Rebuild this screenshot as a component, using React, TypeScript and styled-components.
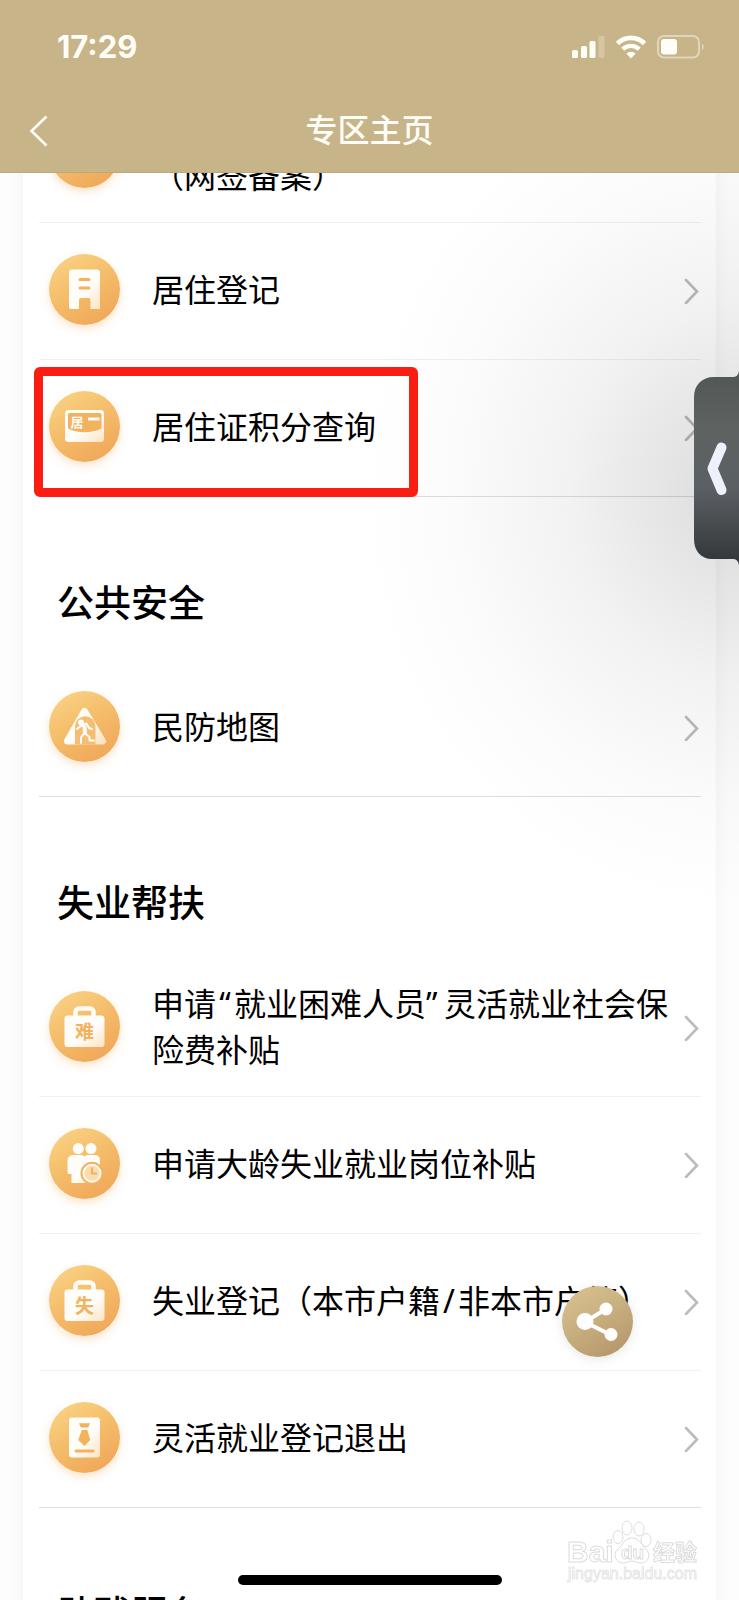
import React from "react";
import styled, { createGlobalStyle } from "styled-components";

const sans = '"Noto Sans CJK SC", "Noto Sans", sans-serif';
const ink = "#f2b25e";

const GlobalStyle = createGlobalStyle`
  * { box-sizing: border-box; }
  body { margin: 0; background: #fdfdfd; color: #000; font-family: ${sans}; }
  button { border: 0; padding: 0; background: none; font: inherit; cursor: pointer; }
  svg { display: block; }
`;

const Screen = styled.div`
  position: relative;
  height: 100vh;
  overflow: hidden;
`;

const Header = styled.header`
  position: fixed;
  inset: 0 0 auto 0;
  z-index: 3;
  height: 173px;
  background: #c7b589;
  border-bottom: 1px solid #bbaa80;
  color: #fffdf8;
`;

const StatusBar = styled.div`
  display: flex;
  align-items: center;
  justify-content: space-between;
  height: 94px;
  padding: 0 34px 0 57px;
`;

const Clock = styled.time`
  font: 700 31px/32px Inter, sans-serif;
`;

const StatusIcons = styled.div`
  display: flex;
  align-items: center;
  gap: 11px;
`;

const NavBar = styled.nav`
  display: grid;
  grid-template-columns: 64px 1fr 64px;
  align-items: center;
  height: 74px;
`;

const BackButton = styled.button`
  justify-self: start;
  padding-left: 29px;
  color: inherit;
`;

const NavTitle = styled.h1`
  margin: 0;
  padding-bottom: 6px;
  font-size: 32px;
  line-height: 48px;
  font-weight: 500;
  text-align: center;
`;

const Card = styled.main`
  margin: 0 23px;
  padding: 86px 15px 0 16px;
  background: #fff;
  box-shadow: 0 0 16px rgba(0, 0, 0, 0.05);
`;

const SectionTitle = styled.h2`
  margin: 0;
  height: 163px;
  padding: 76px 0 0 18px;
  font-size: 37px;
  line-height: 56px;
  font-weight: 500;
`;

const List = styled.ul`
  margin: 0;
  padding: 0;
  list-style: none;
`;

const Item = styled.li`
  position: relative;
  border-bottom: 1px solid #f0f0f0;
  &:last-child { border-bottom-color: #dedede; }
`;

const RowLink = styled.a`
  display: flex;
  align-items: center;
  height: 136px;
  padding: 0 2px 2px 10px;
  color: inherit;
  text-decoration: none;
`;

const Badge = styled.span`
  flex: none;
  width: 71px;
  height: 71px;
  margin: 0 32px 2px 0;
  border-radius: 50%;
  background: linear-gradient(150deg, #f9d283 8%, #f4bb68 50%, #efa557 95%);
  box-shadow: 0 4px 8px rgba(242, 170, 90, 0.3);
`;

const Label = styled.span`
  flex: 1;
  padding-bottom: 5px;
  font-size: 32px;
  line-height: 46px;
`;

const Mark = styled.span<{ $align?: string }>`
  display: inline-block;
  width: 18px;
  font-family: "Noto Sans", sans-serif;
  line-height: 1;
  text-align: ${(p) => p.$align ?? "center"};
`;

const Highlight = styled.span`
  position: absolute;
  top: 7px;
  left: -5px;
  width: 384px;
  height: 130px;
  border: 9px solid #fb1d12;
  border-radius: 6px;
  pointer-events: none;
`;

const Shade = styled.div`
  position: absolute;
  inset: 0;
  z-index: 1;
  pointer-events: none;
  background: radial-gradient(
    380px 420px at 100% 490px,
    rgba(0, 0, 0, 0.14),
    rgba(0, 0, 0, 0.1) 20%,
    rgba(0, 0, 0, 0.05) 45%,
    rgba(0, 0, 0, 0.015) 75%,
    rgba(0, 0, 0, 0)
  );
`;

const SideTab = styled.button`
  position: fixed;
  top: 371px;
  right: 0;
  z-index: 2;
`;

const ShareButton = styled.button`
  position: fixed;
  right: 106px;
  bottom: 243px;
  z-index: 2;
  width: 71px;
  height: 71px;
  border-radius: 50%;
  background: linear-gradient(150deg, #d8c190 5%, #c9b080 45%, #b3946a 95%);
  box-shadow: 0 2px 12px rgba(0, 0, 0, 0.1);
`;

const HomeBar = styled.div`
  position: fixed;
  bottom: 15px;
  left: 50%;
  z-index: 2;
  width: 264px;
  height: 10px;
  border-radius: 5px;
  background: #000;
  transform: translateX(-50%);
`;

const Watermark = styled.div`
  position: fixed;
  right: 40px;
  bottom: 17px;
  z-index: 2;
`;

const Chevron = () => (
  <svg width="15" height="28" viewBox="0 0 15 28" fill="none" stroke="#bcbcbc" strokeWidth="2.6" strokeLinecap="round">
    <path d="M2 4 13 15.500 2 27" />
  </svg>
);

const Glyph = ({ children }: { children: React.ReactNode }) => (
  <Badge>
    <svg width="71" height="71" viewBox="0 0 71 71" aria-hidden="true">
      <defs>
        <linearGradient id="paper" x1="0" y1="0" x2="1" y2="1">
          <stop offset="0.55" stopColor="#fffdfa" />
          <stop offset="1" stopColor="#fde3c2" />
        </linearGradient>
      </defs>
      {children}
    </svg>
  </Badge>
);

const BuildingIcon = () => (
  <Glyph>
    <path fill="url(#paper)" d="M23 15.500H48a3 3 0 0 1 3 3V55H41.500V46a2 2 0 0 0-2-2H32a2 2 0 0 0-2 2V55H22a2 2 0 0 1-2-2V18.500a3 3 0 0 1 3-3Z" />
    <path stroke={ink} strokeWidth="3" strokeLinecap="round" d="M31 25.500H40M31 34H40" />
  </Glyph>
);

const PermitIcon = () => (
  <Glyph>
    <rect x="16" y="19" width="39" height="32" rx="3.500" fill="url(#paper)" />
    <path fill={ink} d="M19 24a2 2 0 0 1 2-2H50.500a2 2 0 0 1 2 2V37.500C43 42.500 28 42.500 19 37.500Z" />
    <text x="21.500" y="36" fontSize="13" fontWeight="700" fill="#fffdfa">居</text>
    <path stroke="#fffdfa" strokeWidth="3" d="M39 28H50.500" />
  </Glyph>
);

const ShelterIcon = () => (
  <Glyph>
    <path fill="url(#paper)" stroke="url(#paper)" strokeWidth="7" strokeLinejoin="round" d="M35.500 20.500 53.500 50H18.500Z" />
    <path fill="#f5bd70" d="M26 53.500V35a9.500 9 0 0 1 20.500 0V53.500Z" />
    <circle cx="32" cy="31.500" r="3" fill="#fffdfa" />
    <path fill="none" stroke="#fffdfa" strokeWidth="2" strokeLinecap="round" strokeLinejoin="round" d="M28 38 31 35.500 37.500 32.500 40 37 43 38" />
    <path stroke="#fffdfa" strokeWidth="4" strokeLinecap="round" d="M35.500 36 36 42" />
    <path fill="none" stroke="#fffdfa" strokeWidth="2" strokeLinecap="round" strokeLinejoin="round" d="M36.500 43 40.500 46V49.500H45M34.500 43 32 46.500V52" />
  </Glyph>
);

const BriefcaseIcon = ({ mark }: { mark: string }) => (
  <Glyph>
    <path fill="none" stroke="#fffdfa" strokeWidth="4.500" d="M26.500 26V21a3.500 3.500 0 0 1 3.500-3.500H41a3.500 3.500 0 0 1 3.500 3.500V26" />
    <rect x="15.500" y="24.500" width="40" height="31.500" rx="3" fill="url(#paper)" />
    <text x="35.500" y="48" fontSize="19" fontWeight="700" fill={ink} textAnchor="middle">{mark}</text>
  </Glyph>
);

const SeniorsIcon = () => (
  <Glyph>
    <circle cx="29.300" cy="20.600" r="5.500" fill="#fffdfa" />
    <circle cx="42" cy="20.600" r="5.500" fill="#fffdfa" />
    <path fill="url(#paper)" d="M24 27H33L35.500 28.500 38 27H46a5 5 0 0 1 5 5V42L38 55H22.500V46H20.500a2 2 0 0 1-2-2V32.500a5.500 5.500 0 0 1 5.500-5.500Z" />
    <circle cx="43" cy="45.200" r="11.500" fill={ink} />
    <circle cx="43" cy="45.200" r="8.500" fill="#fbdcae" stroke="#fff8ee" strokeWidth="2" />
    <path fill="none" stroke={ink} strokeWidth="2" d="M43 39.500V45.500H48" />
  </Glyph>
);

const ResumeIcon = () => (
  <Glyph>
    <rect x="20" y="15.500" width="31" height="40" rx="3" fill="url(#paper)" />
    <path fill={ink} d="M30 21.300H41L39.300 25.500H31.700ZM32.700 28H38.300L41.300 38 35.400 44 29.300 38Z" />
    <path stroke={ink} strokeWidth="3" strokeLinecap="round" d="M27 49H44" />
  </Glyph>
);

const Row = ({ icon, children, marked }: { icon: React.ReactNode; children: React.ReactNode; marked?: boolean }) => (
  <Item>
    <RowLink href="#">
      {icon}
      <Label>{children}</Label>
      <Chevron />
    </RowLink>
    {marked && <Highlight />}
  </Item>
);

export default function App() {
  return (
    <Screen lang="zh-CN">
      <GlobalStyle />
      <Header>
        <StatusBar>
          <Clock>17:29</Clock>
          <StatusIcons>
            <svg width="33" height="24" viewBox="0 0 33 24" fill="currentColor" aria-hidden="true">
              <rect x="0" y="15" width="6" height="8" rx="1.500" />
              <rect x="9" y="11" width="6" height="12" rx="1.500" />
              <rect x="17.500" y="6" width="6" height="17" rx="1.500" />
              <rect x="26.500" y="1" width="6" height="22" rx="1.500" opacity="0.25" />
            </svg>
            <svg width="30" height="24" viewBox="0 0 30 24" fill="none" stroke="currentColor" aria-hidden="true">
              <path strokeWidth="4.800" d="M1.500 8.500A19 19 0 0 1 28.500 8.500" />
              <path strokeWidth="4.400" d="M6.800 14.300A11.500 11.500 0 0 1 23.200 14.300" />
              <path fill="currentColor" stroke="none" d="M15 23.500 10.300 18.600a6.800 6.800 0 0 1 9.400 0Z" />
            </svg>
            <svg width="48" height="24" viewBox="0 0 48 24" aria-hidden="true">
              <rect x="1" y="1" width="41" height="21.500" rx="6" fill="none" stroke="#fff" strokeWidth="2" opacity="0.45" />
              <rect x="4" y="4" width="16" height="15.500" rx="3" fill="currentColor" />
              <path fill="#fff" opacity="0.5" d="M45 8.500a4 4 0 0 1 0 6.500Z" />
            </svg>
          </StatusIcons>
        </StatusBar>
        <NavBar>
          <BackButton aria-label="返回">
            <svg width="20" height="32" viewBox="0 0 20 32" fill="none" stroke="currentColor" strokeWidth="2.600">
              <path d="M17.500 1.500 2.500 16 17.500 30.500" />
            </svg>
          </BackButton>
          <NavTitle>专区主页</NavTitle>
        </NavBar>
      </Header>

      <Card>
        <List>
          <Row icon={<BuildingIcon />}>
            <br />
            （网签备案）
          </Row>
          <Row icon={<BuildingIcon />}>居住登记</Row>
          <Row icon={<PermitIcon />} marked>居住证积分查询</Row>
        </List>

        <SectionTitle>公共安全</SectionTitle>
        <List>
          <Row icon={<ShelterIcon />}>民防地图</Row>
        </List>

        <SectionTitle>失业帮扶</SectionTitle>
        <List>
          <Row icon={<BriefcaseIcon mark="难" />}>
            申请<Mark>“</Mark>就业困难人员<Mark $align="left">”</Mark>灵活就业社会保险费补贴
          </Row>
          <Row icon={<SeniorsIcon />}>申请大龄失业就业岗位补贴</Row>
          <Row icon={<BriefcaseIcon mark="失" />}>
            失业登记（本市户籍<Mark>/</Mark>非本市户籍）
          </Row>
          <Row icon={<ResumeIcon />}>灵活就业登记退出</Row>
        </List>

        <SectionTitle>助残服务</SectionTitle>
      </Card>

      <Shade />

      <SideTab aria-label="展开侧栏">
        <svg width="45" height="194" viewBox="0 0 45 194">
          <defs>
            <linearGradient id="tab" x1="0" y1="0" x2="0" y2="1">
              <stop offset="0" stopColor="#525654" />
              <stop offset="0.3" stopColor="#5e6261" />
              <stop offset="0.6" stopColor="#5b6064" />
              <stop offset="1" stopColor="#323538" />
            </linearGradient>
          </defs>
          <path fill="url(#tab)" d="M45 0C44 5 42 6 38 6H20C8 6 0 14 0 26V168C0 180 7 188 18 188H38C42 188 44 189 45 194Z" />
          <path fill="none" stroke="#eef0fb" strokeWidth="10" strokeLinecap="round" strokeLinejoin="round" d="M27.500 76.500 18.500 97.500 27.500 119" />
        </svg>
      </SideTab>

      <ShareButton aria-label="分享">
        <svg width="71" height="71" viewBox="0 0 71 71" fill="#fff">
          <path fill="none" stroke="#fff" strokeWidth="4" d="M44 23 23 36 49 49" />
          <circle cx="23" cy="35.500" r="8.500" />
          <circle cx="44" cy="23" r="6.500" />
          <circle cx="49" cy="48.500" r="6.500" />
        </svg>
      </ShareButton>

      <Watermark>
        <svg width="134" height="68" viewBox="0 0 134 68" fill="#fff" stroke="#dcdcdc" strokeWidth="1">
          <ellipse cx="53" cy="22" rx="5" ry="6.500" />
          <ellipse cx="62" cy="13" rx="5" ry="7" />
          <ellipse cx="74" cy="14" rx="5" ry="7" />
          <ellipse cx="81" cy="25" rx="5" ry="6.500" />
          <path d="M67 23C59 23 58 30 53 34 47 39 51 48 58 48 62 48 64 46 67 46S72 48 76 48C84 48 86 39 81 34 76 30 75 23 67 23Z" />
          <text x="2" y="47" fontSize="30" fontWeight="700" fontFamily="Liberation Sans, sans-serif">Bai</text>
          <text x="56" y="44" fontSize="19" fontWeight="700" fontFamily="Liberation Sans, sans-serif">du</text>
          <text x="88" y="45" fontSize="22" fontWeight="700">经验</text>
          <text x="3" y="64" fontSize="16" stroke="#e6e6e6" fontFamily="Liberation Sans, sans-serif">jingyan.baidu.com</text>
        </svg>
      </Watermark>
      <HomeBar />
    </Screen>
  );
}
